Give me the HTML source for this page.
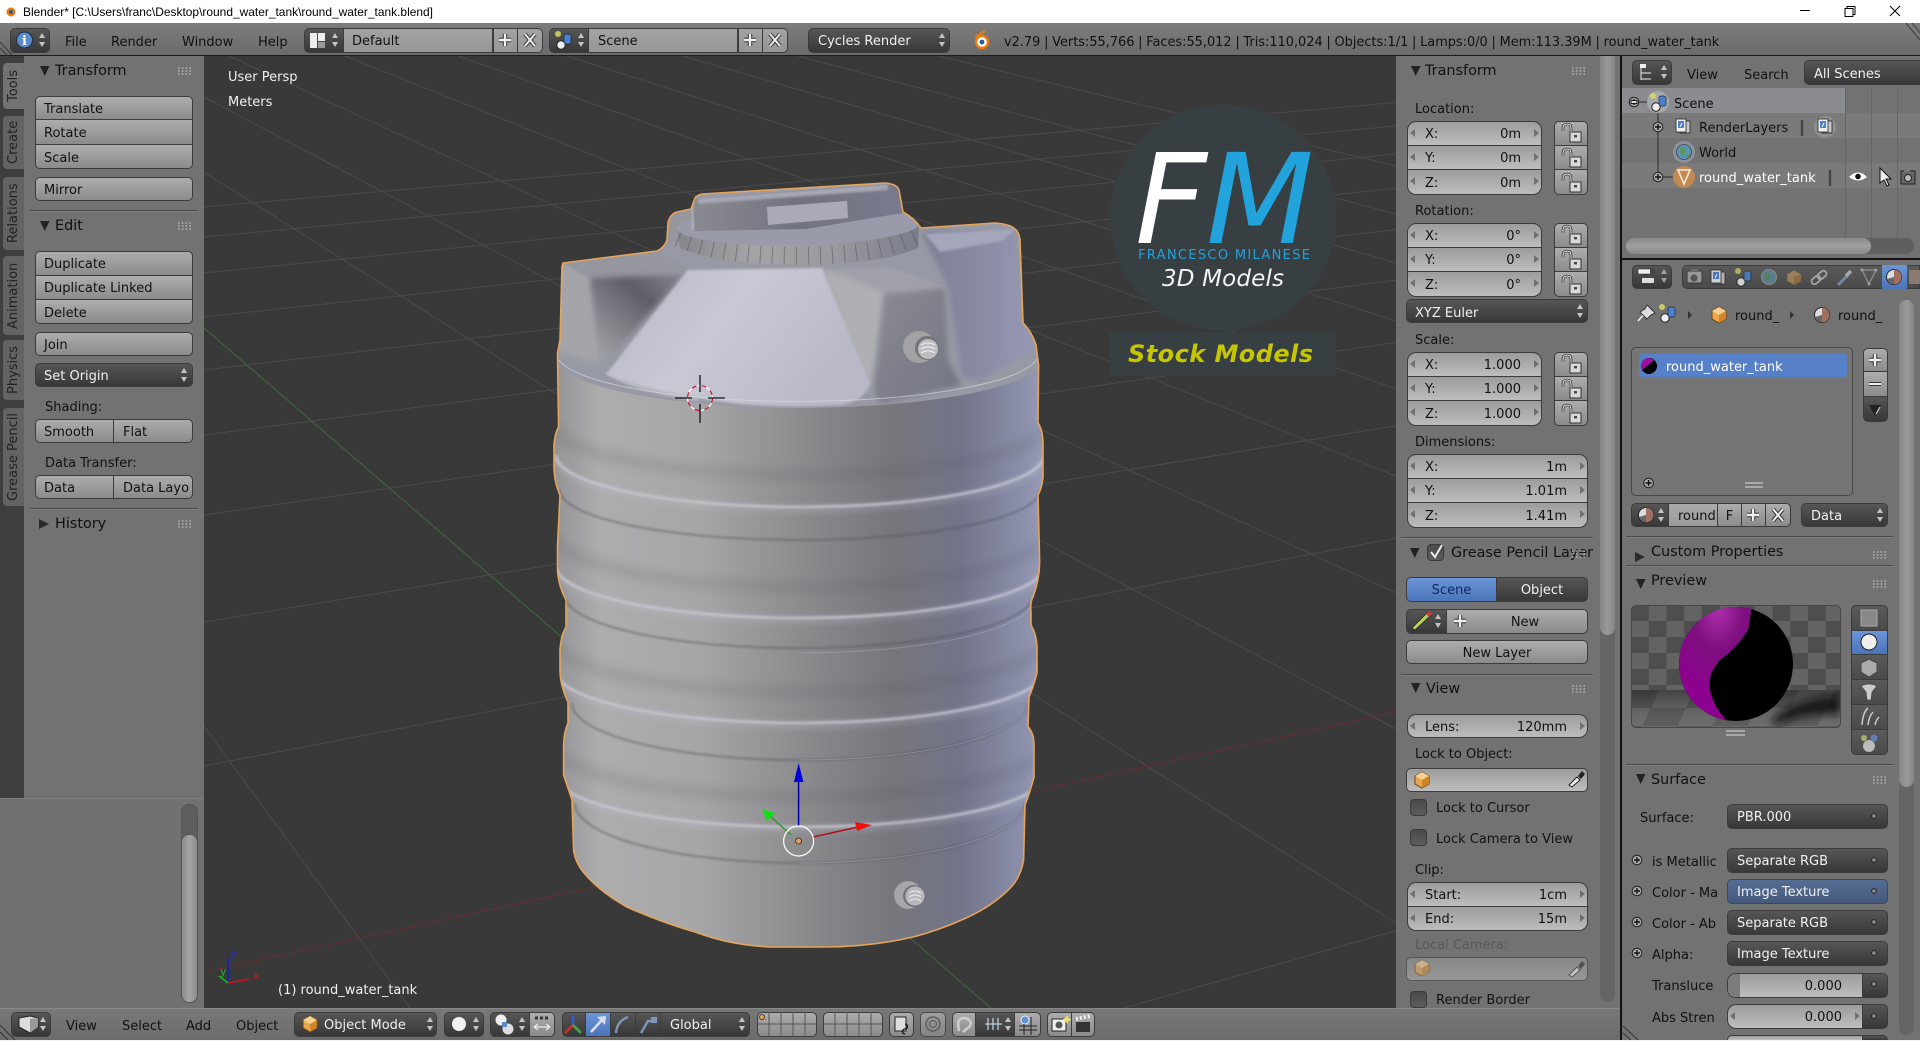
<!DOCTYPE html>
<html><head><meta charset="utf-8"><title>Blender</title>
<style>
html,body{margin:0;padding:0;background:#727272;overflow:hidden;width:1920px;height:1041px}
#root{position:relative;width:1920px;height:1041px;overflow:hidden;font:13px/16px "DejaVu Sans","Liberation Sans",sans-serif;color:#111}
.p{position:absolute}
.t{position:absolute;white-space:nowrap;line-height:16px;margin-top:1px}
.h{font-size:14.4px;margin-top:0}
.w{color:#f0f0f0}
.bx{position:absolute;box-sizing:border-box;border:1px solid #3c3c3c;white-space:nowrap;overflow:hidden;line-height:26px}
.d1{line-height:28px}
.l{background:linear-gradient(#adadad,#8b8b8b);color:#111;padding-left:8px}
.dk{background:linear-gradient(#565656,#383838);color:#f0f0f0}
.fd{background:linear-gradient(#a3a3a3,#969696);color:#111}
.n{background:linear-gradient(#9c9c9c,#bdbdbd);color:#111}
.n i,.n u{position:absolute;font-style:normal;text-decoration:none}
.n i{left:17px}.n u{right:20px}
.n::before,.n::after{content:"";position:absolute;top:7px;border:4px solid transparent}
.n::before{left:2px;border-right:5px solid #707070;border-left:0}
.n::after{right:2px;border-left:5px solid #707070;border-right:0}
.nn::before,.nn::after{display:none}
.ra{border-radius:9px}.rt{border-radius:9px 9px 0 0}.rb{border-radius:0 0 9px 9px}
.r5{border-radius:5px}.rl{border-radius:5px 0 0 5px}.rr{border-radius:0 5px 5px 0}
.rT{border-radius:5px 5px 0 0}.rB{border-radius:0 0 5px 5px}
.bl{background:linear-gradient(#6b95d8,#4b75b8)}
.c{text-align:center;padding:0}
.tab{position:absolute;writing-mode:vertical-rl;transform:rotate(180deg);text-align:center;background:#636363;color:#222;border-radius:0 4px 4px 0;line-height:21px;white-space:nowrap;overflow:hidden}
.chk{position:absolute;box-sizing:border-box;background:linear-gradient(#4a4a4a,#5c5c5c);border:1px solid #3a3a3a;border-radius:4px}
.sep{position:absolute;height:1px;background:#4a4a4a;border-bottom:1px solid #808080}
svg{position:absolute;left:0;top:0}
</style></head><body><div id="root">

<!-- viewport -->
<svg width="1920" height="1041" viewBox="0 0 1920 1041">
<defs>
<path id="sil" d="M563,263 L657,251 Q664,248 667,240 L668,223 Q670,214 677,212 L691,209 L695,198 Q697,195 702,194 L885,183 Q897,184 899,190 L903,212 Q914,218 921,228 L995,223 Q1010,224 1015,229 Q1019,232 1020,240 L1023,323 Q1032,332 1036,345 L1038.6,365 L1038,423 Q1043,430 1043,445 L1043,477 Q1042,488 1038,495 L1039.6,560 Q1040,578 1033,597 Q1030,602 1031,612 L1031,625 Q1037,635 1037,650 L1037,673 Q1033,688 1029,697 L1028,727 Q1034,733 1034,745 L1034,777 Q1030,792 1025,805 L1023.6,860 Q1021,875 1013,885 Q995,905 966,918 Q940,930 913,937 Q870,947 823,947 L770,947 Q730,945 698,933 Q660,922 627,907 Q600,892 584,873 Q575,862 573.6,850 L572,800 Q568,788 563.6,775 L563.6,745 Q564,732 568,723 L568,702 Q560,685 560,670 L560,650 Q561,635 566,627 L566,600 Q558,585 557.5,570 L557.5,547 L560,495 Q554,482 554,465 L554,445 Q555,433 558.6,427 L557.5,353 L560,340 L562,267 Z"/>
<clipPath id="tc"><use href="#sil"/></clipPath>
<linearGradient id="body" x1="0" x2="1" y1="0" y2="0"><stop offset="0" stop-color="#929294"/><stop offset=".1" stop-color="#adadae"/><stop offset=".3" stop-color="#a6a6a7"/><stop offset=".5" stop-color="#8c8c8f"/><stop offset=".68" stop-color="#76767c"/><stop offset=".82" stop-color="#727488"/><stop offset=".95" stop-color="#8c90ac"/><stop offset="1" stop-color="#9da0bb"/></linearGradient>
<linearGradient id="cone" x1="0" x2="1" y1="0" y2=".4"><stop offset="0" stop-color="#b6b6c2"/><stop offset=".5" stop-color="#c9c9d5"/><stop offset="1" stop-color="#b8b8c8"/></linearGradient>
<linearGradient id="rec" x1="1" x2="0" y1="0" y2="1"><stop offset="0" stop-color="#85858e"/><stop offset=".35" stop-color="#5e5e68"/><stop offset="1" stop-color="#a8a8ad"/></linearGradient>
<linearGradient id="blk" x1="0" x2="1" y1="0" y2="1"><stop offset="0" stop-color="#8a8a91"/><stop offset="1" stop-color="#737484"/></linearGradient>
<linearGradient id="rear" x1="0" x2="1" y1="0" y2="0"><stop offset="0" stop-color="#7c7e92"/><stop offset="1" stop-color="#9698b6"/></linearGradient>
<linearGradient id="knurl" x1="0" x2="1" y1="0" y2="0"><stop offset="0" stop-color="#85858c"/><stop offset=".3" stop-color="#a4a4a6"/><stop offset=".65" stop-color="#9a9a9f"/><stop offset="1" stop-color="#7a7c8a"/></linearGradient>
<linearGradient id="hand" x1="0" x2="1" y1="0" y2="0"><stop offset="0" stop-color="#8a8a93"/><stop offset=".5" stop-color="#72737f"/><stop offset="1" stop-color="#787a8e"/></linearGradient>
<filter id="b1" x="-10%" y="-50%" width="120%" height="200%"><feGaussianBlur stdDeviation="1.1"/></filter>
<filter id="b2" x="-10%" y="-50%" width="120%" height="200%"><feGaussianBlur stdDeviation="5"/></filter>
<filter id="b3" x="-20%" y="-20%" width="140%" height="140%"><feGaussianBlur stdDeviation="3"/></filter>
</defs>
<rect x="204" y="56" width="1192" height="952" fill="#393939"/>
<g fill="none" stroke="#4b4b4b" stroke-width="1">
<path d="M204,207L1396,102.5M204,237L1396,125.9M204,273L1396,153.9M204,317L1396,188.2M204,370L1396,229.5M204,435L1396,280.1M204,515L1396,342.5M204,622L1396,425.8M204,766L1396,538M1124,1008L1396,930.6"/>
<path d="M938,56L1396,166M798,56L1396,214M683,56L1396,263M567,56L1396,321M458,56L1396,389M345,56L1396,476M229,56L1396,593M204,97L1396,729M204,172L1396,923M204,726L410,1008"/>
<path d="M204,972L1396,712" stroke="#6a2d2d"/>
<path d="M204,328L991,1008" stroke="#3e6a3e"/>
</g>
<!-- logo -->
<circle cx="1223" cy="217.6" r="113" fill="#373f43"/>
<rect x="1109" y="332" width="227" height="44" fill="#373f43"/>
<text x="1135" y="243" font-family="DejaVu Sans" font-style="oblique" font-size="125" fill="#fff">F</text>
<text x="1206" y="243" font-family="DejaVu Sans" font-style="oblique" font-size="125" fill="#23a3dc">M</text>
<text x="1138" y="259" font-family="DejaVu Sans" font-size="13" fill="#23a3dc" textLength="172">FRANCESCO MILANESE</text>
<text x="1162" y="286" font-family="DejaVu Sans" font-style="oblique" font-size="23" fill="#f2f2f2" textLength="122">3D Models</text>
<text x="1128" y="362" font-family="DejaVu Sans" font-style="oblique" font-weight="bold" font-size="24" fill="#c5c600" textLength="185">Stock Models</text>
<!-- tank -->
<g clip-path="url(#tc)">
<rect x="550" y="180" width="500" height="780" fill="url(#body)"/>
<path d="M555,180H1045V357A241,50 0 0 1 555,357Z" fill="#979aa4"/>
<path d="M557,263H592L600,365L557,350Z" fill="#a5a5a9" filter="url(#b3)"/>
<path d="M563,263L657,251L690,270L588,278Z" fill="#96969e" filter="url(#b1)"/>
<path d="M590,278L684,274L610,358L600,356Z" fill="url(#rec)" filter="url(#b3)"/>
<path d="M823,270L891,267L945,287L884,293Z" fill="#a0a0aa" filter="url(#b1)"/>
<path d="M822,268L884,292L878,340L870,392Z" fill="#b0b0b4" filter="url(#b3)"/>
<path d="M885,295L945,289L948,360L962,385L880,404L874,392Z" fill="url(#blk)" filter="url(#b3)"/>
<path d="M921,232L1015,230L1022,317L1036,348L980,381L962,377L948,287Z" fill="url(#rear)" filter="url(#b3)"/>
<path d="M925,234L1015,229L1002,241L940,252Z" fill="#a4a6ba" filter="url(#b1)"/>
<path d="M688,270L822,268L870,383Q866,400 841,405Q760,410 698,398Q640,390 607,373Z" fill="url(#cone)" filter="url(#b1)"/>
<path d="M606,373Q640,392 698,400" fill="none" stroke="#eee" stroke-width="2" opacity=".5" filter="url(#b1)"/>
<path d="M559,360A241,48 0 0 0 1038,357" fill="none" stroke="#dcdce4" stroke-width="1" opacity=".65"/>
<g fill="none">
<g filter="url(#b2)" stroke="#50505a" stroke-width="10" opacity=".17">
<path d="M555,425A245,50 0 0 0 1045,425"/><path d="M555,535A245,52 0 0 0 1045,535"/><path d="M555,640A245,52 0 0 0 1045,640"/><path d="M555,745A245,52 0 0 0 1045,745"/>
</g>
<g filter="url(#b3)" stroke="#c8c8d4" stroke-width="8" opacity=".22">
<path d="M556,457A244,52 0 0 0 1044,457"/><path d="M556,568A244,52 0 0 0 1044,568"/><path d="M556,673A244,52 0 0 0 1044,673"/><path d="M556,777A244,52 0 0 0 1044,777"/>
</g>
<g filter="url(#b1)" stroke="#c8c8d6" stroke-width="2.6" opacity=".85">
<path d="M556,455A244,52 0 0 0 1044,455"/><path d="M556,566A244,52 0 0 0 1044,566"/><path d="M556,671A244,52 0 0 0 1044,671"/><path d="M556,775A244,52 0 0 0 1044,775"/>
</g>
<g filter="url(#b1)" stroke="#4e4e58" stroke-width="1.8" opacity=".5">
<path d="M560,490A240,50 0 0 0 1040,490"/><path d="M566,600A234,53 0 0 0 1032,600"/><path d="M572,703A228,57 0 0 0 1028,703"/><path d="M575,803A225,60 0 0 0 1025,803"/>
</g>
<g stroke="#a8abbd" stroke-width="1" opacity=".5">
<path d="M800,653A234,53 0 0 0 1032,600"/><path d="M800,760A228,57 0 0 0 1028,703"/><path d="M800,863A225,60 0 0 0 1025,803"/>
</g>
</g>
<!-- cap -->
<path d="M668,212H691L690,234L668,244Z" fill="#96969c"/>
<path d="M677,228L680,248Q720,265 798,265Q880,265 918,248L919,223Z" fill="url(#knurl)"/>
<path d="M678,238Q720,256 798,256Q880,256 919,235" fill="none" stroke="#55555c" stroke-width="18" stroke-dasharray="1 11" opacity=".55"/>
<ellipse cx="798" cy="226" rx="121" ry="19" transform="rotate(-1.2 798 226)" fill="#9a9baa"/>
<path d="M695,198L888,184Q897,185 899,190L903,213L806,229L694,231Q689,215 695,198Z" fill="url(#hand)"/>
<path d="M698,201L888,187" stroke="#a6a6b4" stroke-width="6" filter="url(#b1)"/>
<path d="M692,202Q690,216 694,230" stroke="#a8a8ae" stroke-width="5" fill="none" filter="url(#b1)"/>
<path d="M767,207L847,201L848,218L768,225Z" fill="#a9a9ba"/>
<!-- fittings -->
<circle cx="919" cy="347" r="16" fill="#a3a3a6"/><circle cx="927" cy="348" r="12" fill="#74747a"/><circle cx="928" cy="349" r="10" fill="#bdbdc2"/>
<path d="M921,345q7,-4 14,0M921,349q7,-4 14,0M921,353q7,-4 14,0" stroke="#f0f0f0" fill="none"/>
<circle cx="908" cy="895" r="14" fill="#a6a6aa"/><circle cx="914" cy="896" r="11" fill="#74747c"/><circle cx="915" cy="896" r="9.5" fill="#b8b8bc"/>
<path d="M909,893q6,-4 12,0M909,897q6,-4 12,0M909,901q6,-4 12,0" stroke="#ececec" fill="none"/>
</g>
<use href="#sil" fill="none" stroke="#e5a45c" stroke-width="1.6" stroke-linejoin="round"/>
<!-- 3d cursor -->
<circle cx="700" cy="398" r="12.5" fill="none" stroke="#fff" stroke-width="1.2"/>
<circle cx="700" cy="398" r="12.5" fill="none" stroke="#c01030" stroke-width="1.2" stroke-dasharray="5 5"/>
<path d="M675,398H692M708,398H725M700,375V392M700,404V423" stroke="#111" stroke-width="1.3"/>
<!-- manipulator -->
<path d="M798.6,826V780" stroke="#0000b0" stroke-width="1.5"/><path d="M798.6,763L794,782H803.5Z" fill="#0000e0"/>
<path d="M791,835L770,816" stroke="#2a9a2a" stroke-width="1.5"/><path d="M762,809L775,813L767,821Z" fill="#10e010"/>
<path d="M813,837L858,827" stroke="#b01020" stroke-width="1.5"/><path d="M872,825L855,822L857,831Z" fill="#f01010"/>
<circle cx="798.6" cy="841" r="15" fill="none" stroke="#fff" stroke-width="1.2"/>
<circle cx="798.6" cy="841" r="3" fill="#e0a060" stroke="#222" stroke-width=".8"/>
<!-- axis gizmo -->
<path d="M228,983V958" stroke="#1020d0" stroke-width="1.5"/><path d="M228,983L250,979" stroke="#d01020" stroke-width="1.5"/><path d="M228,983L219,976" stroke="#10c020" stroke-width="1.5"/>
<text x="231" y="958" font-family="DejaVu Sans" font-size="11" fill="#2030d0">z</text>
<text x="253" y="979" font-family="DejaVu Sans" font-size="11" fill="#c02020">x</text>
<text x="220" y="975" font-family="DejaVu Sans" font-size="11" fill="#20b030">y</text>
</svg>
<div class="t w" style="left:228px;top:69px">User Persp</div>
<div class="t w" style="left:228px;top:94px">Meters</div>
<div class="t w" style="left:278px;top:982px">(1) round_water_tank</div>

<!-- title bar -->
<div class="p" style="left:0;top:0;width:1920px;height:23px;background:#fff"></div>
<svg width="1920" height="23" viewBox="0 0 1920 23" style="z-index:2">
<circle cx="11" cy="12" r="4.5" fill="#e87d0d"/><circle cx="11" cy="12" r="2" fill="#2a5a9a"/>
<text x="23" y="16" font-family="Liberation Sans" font-size="12" fill="#000" textLength="410" lengthAdjust="spacingAndGlyphs">Blender* [C:\Users\franc\Desktop\round_water_tank\round_water_tank.blend]</text>
<path d="M1800,10.5H1810" stroke="#000"/><path d="M1845,8.5h8v8h-8zM1847,8.5v-2h8v8h-2" fill="#fff" stroke="#000"/><path d="M1890,6L1900,16M1900,6L1890,16" stroke="#000"/>
</svg>

<!-- top bar -->
<div class="p" style="left:0;top:23px;width:1920px;height:33px;background:linear-gradient(#7d7d7d,#6b6b6b);border-bottom:1px solid #1c1c1c;box-sizing:border-box"></div>
<div class="bx dk r5" style="left:10px;top:28px;width:40px;height:25px"></div>
<div class="t" style="left:65px;top:34px">File</div><div class="t" style="left:111px;top:34px">Render</div><div class="t" style="left:182px;top:34px">Window</div><div class="t" style="left:258px;top:34px">Help</div>
<div class="bx dk rl" style="left:304px;top:28px;width:40px;height:25px"></div>
<div class="bx fd" style="left:343px;top:28px;width:150px;height:25px;padding-left:8px">Default</div>
<div class="bx fd" style="left:493px;top:28px;width:25px;height:25px"></div>
<div class="bx fd rr" style="left:517px;top:28px;width:26px;height:25px"></div>
<div class="bx dk rl" style="left:549px;top:28px;width:40px;height:25px"></div>
<div class="bx fd" style="left:588px;top:28px;width:150px;height:25px;padding-left:9px">Scene</div>
<div class="bx fd" style="left:738px;top:28px;width:25px;height:25px"></div>
<div class="bx fd rr" style="left:762px;top:28px;width:26px;height:25px"></div>
<div class="bx dk r5" style="left:808px;top:28px;width:142px;height:25px;padding-left:9px">Cycles Render</div>
<div class="t" style="left:1004px;top:34px;font-size:12.9px;word-spacing:-.35px">v2.79 | Verts:55,766 | Faces:55,012 | Tris:110,024 | Objects:1/1 | Lamps:0/0 | Mem:113.39M | round_water_tank</div>

<!-- left tabs + tool shelf -->
<div class="p" style="left:0;top:56px;width:24px;height:742px;background:#3e3e3e"></div>
<div class="p" style="left:24px;top:56px;width:180px;height:742px;background:#727272"></div>
<div class="tab" style="left:3px;top:63px;width:21px;height:46px;background:#727272">Tools</div>
<div class="tab" style="left:3px;top:116px;width:21px;height:53px">Create</div>
<div class="tab" style="left:3px;top:177px;width:21px;height:73px">Relations</div>
<div class="tab" style="left:3px;top:256px;width:21px;height:79px">Animation</div>
<div class="tab" style="left:3px;top:340px;width:21px;height:60px">Physics</div>
<div class="tab" style="left:3px;top:408px;width:21px;height:98px">Grease Pencil</div>
<div class="t h" style="left:55px;top:63px">Transform</div>
<div class="bx l rT" style="left:35px;top:96px;width:158px;height:24px">Translate</div>
<div class="bx l d1" style="left:35px;top:119px;width:158px;height:26px">Rotate</div>
<div class="bx l rB d1" style="left:35px;top:144px;width:158px;height:25px">Scale</div>
<div class="bx l r5" style="left:35px;top:177px;width:158px;height:24px">Mirror</div>
<div class="sep" style="left:30px;top:210px;width:168px"></div>
<div class="t h" style="left:55px;top:218px">Edit</div>
<div class="bx l rT" style="left:35px;top:251px;width:158px;height:25px">Duplicate</div>
<div class="bx l" style="left:35px;top:275px;width:158px;height:25px">Duplicate Linked</div>
<div class="bx l rB d1" style="left:35px;top:299px;width:158px;height:25px">Delete</div>
<div class="bx l r5" style="left:35px;top:332px;width:158px;height:24px">Join</div>
<div class="bx dk r5" style="left:35px;top:363px;width:158px;height:24px;padding-left:8px">Set Origin</div>
<div class="t" style="left:45px;top:399px">Shading:</div>
<div class="bx l rl" style="left:35px;top:419px;width:79px;height:24px">Smooth</div>
<div class="bx l rr" style="left:113px;top:419px;width:80px;height:24px;padding-left:9px">Flat</div>
<div class="t" style="left:45px;top:455px">Data Transfer:</div>
<div class="bx l rl" style="left:35px;top:475px;width:79px;height:24px">Data</div>
<div class="bx l rr" style="left:113px;top:475px;width:80px;height:24px;padding-left:9px">Data Layo</div>
<div class="sep" style="left:30px;top:508px;width:168px"></div>
<div class="t h" style="left:55px;top:516px">History</div>
<div class="p" style="left:0;top:798px;width:204px;height:211px;background:#717171;border-top:1px solid #808080;box-sizing:border-box"></div>
<div class="p" style="left:181px;top:804px;width:17px;height:199px;border-radius:8px;background:#5e5e5e;border:1px solid #555;box-sizing:border-box"></div>
<div class="p" style="left:181px;top:834px;width:17px;height:169px;border-radius:8px;background:linear-gradient(90deg,#8c8c8c,#a4a4a4,#8c8c8c);border:1px solid #555;box-sizing:border-box"></div>

<!-- N panel -->
<div class="p" style="left:1396px;top:56px;width:224px;height:952px;background:#727272"></div>
<div class="p" style="left:1600px;top:56px;width:15px;height:946px;border-radius:8px;background:#656565"></div>
<div class="p" style="left:1600px;top:56px;width:15px;height:579px;border-radius:0 0 8px 8px;background:linear-gradient(90deg,#858585,#9a9a9a,#858585)"></div>
<div class="t h" style="left:1425px;top:63px">Transform</div>
<div class="t" style="left:1415px;top:101px">Location:</div>
<div class="bx n rt" style="left:1407px;top:121px;width:135px;height:25px"><i>X:</i><u>0m</u></div>
<div class="bx n" style="left:1407px;top:145px;width:135px;height:25px"><i>Y:</i><u>0m</u></div>
<div class="bx n rb d1" style="left:1407px;top:169px;width:135px;height:26px"><i>Z:</i><u>0m</u></div>
<div class="bx l rT" style="left:1554px;top:121px;width:34px;height:25px"></div><div class="bx l" style="left:1554px;top:145px;width:34px;height:25px"></div><div class="bx l rB" style="left:1554px;top:169px;width:34px;height:26px"></div>
<div class="t" style="left:1415px;top:203px">Rotation:</div>
<div class="bx n rt" style="left:1407px;top:223px;width:135px;height:25px"><i>X:</i><u>0°</u></div>
<div class="bx n" style="left:1407px;top:247px;width:135px;height:25px"><i>Y:</i><u>0°</u></div>
<div class="bx n rb d1" style="left:1407px;top:271px;width:135px;height:26px"><i>Z:</i><u>0°</u></div>
<div class="bx l rT" style="left:1554px;top:223px;width:34px;height:25px"></div><div class="bx l" style="left:1554px;top:247px;width:34px;height:25px"></div><div class="bx l rB" style="left:1554px;top:271px;width:34px;height:26px"></div>
<div class="bx dk r5 d1" style="left:1406px;top:299px;width:182px;height:24px;padding-left:8px">XYZ Euler</div>
<div class="t" style="left:1415px;top:332px">Scale:</div>
<div class="bx n rt" style="left:1407px;top:352px;width:135px;height:25px"><i>X:</i><u>1.000</u></div>
<div class="bx n" style="left:1407px;top:376px;width:135px;height:25px"><i>Y:</i><u>1.000</u></div>
<div class="bx n rb d1" style="left:1407px;top:400px;width:135px;height:26px"><i>Z:</i><u>1.000</u></div>
<div class="bx l rT" style="left:1554px;top:352px;width:34px;height:25px"></div><div class="bx l" style="left:1554px;top:376px;width:34px;height:25px"></div><div class="bx l rB" style="left:1554px;top:400px;width:34px;height:26px"></div>
<div class="t" style="left:1415px;top:434px">Dimensions:</div>
<div class="bx n rt" style="left:1407px;top:454px;width:181px;height:25px"><i>X:</i><u>1m</u></div>
<div class="bx n" style="left:1407px;top:478px;width:181px;height:25px"><i>Y:</i><u>1.01m</u></div>
<div class="bx n rb d1" style="left:1407px;top:502px;width:181px;height:26px"><i>Z:</i><u>1.41m</u></div>
<div class="sep" style="left:1401px;top:537px;width:192px"></div>
<div class="chk" style="left:1427px;top:544px;width:17px;height:17px"></div>
<div class="t h" style="left:1451px;top:545px">Grease Pencil Layer</div>
<div class="bx bl rl c" style="left:1406px;top:577px;width:91px;height:25px;color:#0c2a60">Scene</div>
<div class="bx dk rr c" style="left:1496px;top:577px;width:92px;height:25px">Object</div>
<div class="bx dk rl" style="left:1406px;top:609px;width:41px;height:25px"></div>
<div class="bx l rr c" style="left:1446px;top:609px;width:142px;height:25px;padding-left:16px">New</div>
<div class="bx l r5 c" style="left:1406px;top:640px;width:182px;height:24px">New Layer</div>
<div class="sep" style="left:1401px;top:674px;width:192px"></div>
<div class="t h" style="left:1426px;top:681px">View</div>
<div class="bx n ra" style="left:1407px;top:714px;width:181px;height:24px"><i>Lens:</i><u>120mm</u></div>
<div class="t" style="left:1415px;top:746px">Lock to Object:</div>
<div class="bx n nn r5" style="left:1406px;top:768px;width:182px;height:24px"></div>
<div class="chk" style="left:1410px;top:799px;width:17px;height:17px"></div><div class="t" style="left:1436px;top:800px">Lock to Cursor</div>
<div class="chk" style="left:1410px;top:829px;width:17px;height:17px"></div><div class="t" style="left:1436px;top:831px">Lock Camera to View</div>
<div class="t" style="left:1415px;top:862px">Clip:</div>
<div class="bx n rt" style="left:1407px;top:882px;width:181px;height:25px"><i>Start:</i><u>1cm</u></div>
<div class="bx n rb" style="left:1407px;top:906px;width:181px;height:25px"><i>End:</i><u>15m</u></div>
<div class="t" style="left:1415px;top:937px;color:#585858">Local Camera:</div>
<div class="bx n nn r5" style="left:1406px;top:957px;width:182px;height:24px;opacity:.5"></div>
<div class="chk" style="left:1410px;top:991px;width:17px;height:17px"></div><div class="t" style="left:1436px;top:992px">Render Border</div>

<!-- bottom header -->
<div class="p" style="left:0;top:1008px;width:1620px;height:32px;background:linear-gradient(#787878,#6c6c6c);border-top:1px solid #888;box-sizing:border-box"></div>
<div class="bx dk r5" style="left:11px;top:1012px;width:40px;height:25px"></div>
<div class="t" style="left:66px;top:1018px">View</div><div class="t" style="left:122px;top:1018px">Select</div><div class="t" style="left:186px;top:1018px">Add</div><div class="t" style="left:236px;top:1018px">Object</div>
<div class="bx dk r5" style="left:294px;top:1012px;width:143px;height:25px;padding-left:29px">Object Mode</div>
<div class="bx dk r5" style="left:444px;top:1012px;width:40px;height:25px"></div>
<div class="bx dk rl" style="left:490px;top:1012px;width:40px;height:25px"></div>
<div class="bx l rr" style="left:529px;top:1012px;width:26px;height:25px"></div>
<div class="bx dk rl" style="left:562px;top:1012px;width:24px;height:25px"></div>
<div class="bx bl" style="left:585px;top:1012px;width:26px;height:25px"></div>
<div class="bx dk" style="left:610px;top:1012px;width:26px;height:25px"></div>
<div class="bx dk" style="left:635px;top:1012px;width:26px;height:25px"></div>
<div class="bx dk rr" style="left:660px;top:1012px;width:90px;height:25px;padding-left:9px">Global</div>
<div class="bx l r5" style="left:757px;top:1012px;width:60px;height:25px"></div>
<div class="bx l r5" style="left:823px;top:1012px;width:60px;height:25px"></div>
<div class="bx l r5" style="left:889px;top:1012px;width:25px;height:25px"></div>
<div class="bx l r5" style="left:920px;top:1012px;width:26px;height:25px;opacity:.75"></div>
<div class="bx l rl" style="left:952px;top:1012px;width:24px;height:25px"></div>
<div class="bx dk" style="left:975px;top:1012px;width:40px;height:25px"></div>
<div class="bx l rr" style="left:1014px;top:1012px;width:27px;height:25px"></div>
<div class="bx l rl" style="left:1047px;top:1012px;width:25px;height:25px"></div>
<div class="bx l rr" style="left:1071px;top:1012px;width:24px;height:25px"></div>

<!-- right side: outliner -->
<div class="p" style="left:1620px;top:56px;width:300px;height:984px;background:#727272;border-left:2px solid #111;box-sizing:border-box"></div>
<div class="bx dk r5" style="left:1632px;top:60px;width:40px;height:25px"></div>
<div class="t" style="left:1687px;top:67px">View</div><div class="t" style="left:1744px;top:67px">Search</div>
<div class="bx dk" style="left:1804px;top:60px;width:116px;height:25px;padding-left:9px;border-radius:5px 0 0 5px;border-right:0;line-height:27px">All Scenes</div>
<div class="p" style="left:1622px;top:87px;width:298px;height:151px;background:#727272"></div>
<div class="p" style="left:1622px;top:113px;width:298px;height:25px;background:#7a7a7a"></div>
<div class="p" style="left:1622px;top:163px;width:298px;height:25px;background:#7a7a7a"></div>
<div class="p" style="left:1622px;top:88px;width:223px;height:25px;background:#8b8c90"></div>
<div class="p" style="left:1845px;top:87px;width:1px;height:151px;background:#666"></div>
<div class="p" style="left:1871px;top:87px;width:1px;height:151px;background:#666"></div>
<div class="p" style="left:1897px;top:87px;width:1px;height:151px;background:#666"></div>
<div class="t" style="left:1674px;top:96px">Scene</div>
<div class="t" style="left:1699px;top:120px">RenderLayers</div>
<div class="t" style="left:1699px;top:145px">World</div>
<div class="t" style="left:1699px;top:170px;color:#fff">round_water_tank</div>
<div class="p" style="left:1626px;top:238px;width:288px;height:16px;border-radius:8px;background:#5f5f5f"></div>
<div class="p" style="left:1626px;top:238px;width:245px;height:16px;border-radius:8px;background:linear-gradient(#8a8a8a,#9f9f9f,#8a8a8a)"></div>
<div class="p" style="left:1622px;top:258px;width:298px;height:2px;background:#151515"></div>

<!-- properties -->
<div class="bx dk r5" style="left:1632px;top:265px;width:40px;height:24px"></div>
<div class="p" style="left:1682px;top:265px;width:238px;height:24px;background:linear-gradient(#5a5a5a,#4a4a4a);border-radius:5px 0 0 5px;box-sizing:border-box;border:1px solid #3c3c3c"></div>
<div class="p" style="left:1882px;top:265px;width:25px;height:24px;background:linear-gradient(#6d96d8,#4b75b8)"></div>
<div class="p" style="left:1899px;top:300px;width:15px;height:735px;border-radius:8px;background:#656565"></div>
<div class="p" style="left:1899px;top:300px;width:15px;height:487px;border-radius:8px;background:linear-gradient(90deg,#858585,#9a9a9a,#858585)"></div>
<div class="t" style="left:1735px;top:308px">round_</div>
<div class="t" style="left:1838px;top:308px">round_</div>
<div class="bx" style="left:1631px;top:347px;width:222px;height:149px;background:#757575;border-color:#484848;border-radius:5px"></div>
<div class="p" style="left:1639px;top:354px;width:208px;height:23px;border-radius:3px;background:#5680c8"></div>
<div class="t" style="left:1666px;top:359px;color:#fff">round_water_tank</div>
<div class="bx l rT" style="left:1863px;top:348px;width:25px;height:24px"></div>
<div class="bx l" style="left:1863px;top:371px;width:25px;height:26px"></div>
<div class="bx dk rB" style="left:1863px;top:396px;width:25px;height:26px"></div>
<div class="bx dk rl" style="left:1631px;top:503px;width:38px;height:24px"></div>
<div class="bx fd" style="left:1668px;top:503px;width:50px;height:24px;background:linear-gradient(#aaa,#9a9a9a);padding-left:9px">round</div>
<div class="bx l c" style="left:1717px;top:503px;width:25px;height:24px">F</div>
<div class="bx l" style="left:1741px;top:503px;width:25px;height:24px"></div>
<div class="bx l rr" style="left:1765px;top:503px;width:26px;height:24px"></div>
<div class="bx dk r5" style="left:1801px;top:503px;width:87px;height:24px;padding-left:9px">Data</div>
<div class="sep" style="left:1626px;top:536px;width:267px"></div>
<div class="t h" style="left:1651px;top:544px">Custom Properties</div>
<div class="sep" style="left:1626px;top:565px;width:267px"></div>
<div class="t h" style="left:1651px;top:573px">Preview</div>

<!-- preview -->
<svg width="1920" height="1041" viewBox="0 0 1920 1041">
<defs>
<pattern id="chk" x="1631" y="605" width="35.4" height="32" patternUnits="userSpaceOnUse"><rect width="35.4" height="32" fill="#636363"/><rect width="17.7" height="16" fill="#4e4e4e"/><rect x="17.7" y="16" width="17.7" height="16" fill="#4e4e4e"/></pattern>
<pattern id="flc" x="1631" y="690" width="70" height="36" patternUnits="userSpaceOnUse" patternTransform="skewX(-25)"><rect width="70" height="36" fill="#5f5f5f"/><rect width="35" height="18" fill="#6f6f6f"/><rect x="35" y="18" width="35" height="18" fill="#6f6f6f"/></pattern>
<linearGradient id="fl" x1="0" x2="0" y1="0" y2="1"><stop offset="0" stop-color="#000" stop-opacity=".4"/><stop offset=".6" stop-color="#000" stop-opacity=".08"/><stop offset="1" stop-color="#000" stop-opacity="0"/></linearGradient>
<clipPath id="pv"><rect x="1631" y="605" width="210" height="123" rx="5"/></clipPath>
<clipPath id="sph"><circle cx="1736" cy="664" r="57"/></clipPath>
<radialGradient id="mg" cx=".55" cy=".05" r=".75"><stop offset="0" stop-color="#b030b0"/><stop offset=".45" stop-color="#7e1080"/><stop offset="1" stop-color="#8d0090"/></radialGradient>
<filter id="sm"><feGaussianBlur stdDeviation="4"/></filter>
</defs>
<g clip-path="url(#pv)"><rect x="1631" y="605" width="210" height="123" fill="url(#chk)"/>
<rect x="1631" y="690" width="210" height="38" fill="url(#flc)"/>
<rect x="1631" y="690" width="210" height="38" fill="url(#fl)"/>
<path d="M1770,722Q1790,698 1840,695V715Q1800,712 1780,725Z" fill="#111" opacity=".8" filter="url(#sm)"/></g>
<g clip-path="url(#sph)"><rect x="1675" y="600" width="125" height="125" fill="#000"/>
<path d="M1753,600L1748,630Q1735,650 1720,660Q1707,675 1710,690Q1714,708 1728,722L1675,725V600Z" fill="url(#mg)"/></g>
<rect x="1631.5" y="605.5" width="209" height="122" rx="5" fill="none" stroke="#484848"/>
</svg>
<div class="bx l rT" style="left:1851px;top:605px;width:37px;height:26px;background:linear-gradient(#5a5a5a,#4a4a4a)"></div>
<div class="bx bl" style="left:1851px;top:630px;width:37px;height:25px"></div>
<div class="bx" style="left:1851px;top:654px;width:37px;height:26px;background:linear-gradient(#5a5a5a,#4a4a4a)"></div>
<div class="bx" style="left:1851px;top:679px;width:37px;height:26px;background:linear-gradient(#5a5a5a,#4a4a4a)"></div>
<div class="bx" style="left:1851px;top:704px;width:37px;height:26px;background:linear-gradient(#5a5a5a,#4a4a4a)"></div>
<div class="bx rB" style="left:1851px;top:729px;width:37px;height:26px;background:linear-gradient(#5a5a5a,#4a4a4a)"></div>
<div class="sep" style="left:1626px;top:764px;width:267px"></div>
<div class="t h" style="left:1651px;top:772px">Surface</div>
<div class="t" style="left:1640px;top:810px">Surface:</div>
<div class="bx dk r5" style="left:1727px;top:804px;width:161px;height:25px;padding-left:9px">PBR.000</div>
<div class="t" style="left:1652px;top:854px">is Metallic</div>
<div class="bx dk r5" style="left:1727px;top:848px;width:161px;height:25px;padding-left:9px">Separate RGB</div>
<div class="t" style="left:1652px;top:885px">Color - Ma</div>
<div class="bx r5" style="left:1727px;top:879px;width:161px;height:25px;padding-left:9px;color:#f0f0f0;background:linear-gradient(#566d94,#44597c);border-color:#3a4a60">Image Texture</div>
<div class="t" style="left:1652px;top:916px">Color - Ab</div>
<div class="bx dk r5" style="left:1727px;top:910px;width:161px;height:25px;padding-left:9px">Separate RGB</div>
<div class="t" style="left:1652px;top:947px">Alpha:</div>
<div class="bx dk r5" style="left:1727px;top:941px;width:161px;height:25px;padding-left:9px">Image Texture</div>
<div class="t" style="left:1652px;top:978px">Transluce</div>
<div class="bx nn n" style="left:1727px;top:973px;width:136px;height:25px;border-radius:9px 0 0 9px"><u>0.000</u></div>
<div class="p" style="left:1728px;top:974px;width:12px;height:23px;border-radius:9px 0 0 9px;background:#7c7c7c"></div>
<div class="bx dk rr" style="left:1862px;top:973px;width:26px;height:25px"></div>
<div class="t" style="left:1652px;top:1010px">Abs Stren</div>
<div class="bx n" style="left:1727px;top:1004px;width:136px;height:25px;border-radius:9px 0 0 9px"><u>0.000</u></div>
<div class="bx dk rr" style="left:1862px;top:1004px;width:26px;height:25px"></div>
<div class="bx n nn" style="left:1727px;top:1035px;width:136px;height:5px;border-radius:9px 0 0 0;border-bottom:0"></div>
<div class="bx dk" style="left:1862px;top:1035px;width:26px;height:5px;border-radius:0 5px 0 0;border-bottom:0"></div>
<div class="p" style="left:0;top:1040px;width:1920px;height:1px;background:#f4f4f4"></div>

<!-- icons overlay -->
<svg width="1920" height="1041" viewBox="0 0 1920 1041" style="z-index:5;pointer-events:none">
<defs>
<path id="ud" d="M-3,-2L0,-7L3,-2ZM-3,2L0,7L3,2Z" fill="#c4c4c4"/>
<path id="grip" d="M0,1H15M0,4H15M0,7H15" stroke="#d4d4d4" stroke-dasharray="1.6 2.2" stroke-width="1.1" fill="none"/>
<path id="td" d="M0,0H9.5L4.7,10Z" fill="#222"/>
<path id="tr" d="M0,0L10,5L0,10Z" fill="#2a2a2a"/>
<g id="lock"><rect x="-2" y="-1" width="11" height="10" fill="#d8d8d8" stroke="#333"/><rect x="2" y="2" width="3" height="2.4" fill="#444"/><path d="M-1,-1V-5Q-1,-9 -5,-9Q-9,-9 -9,-5V-2" fill="none" stroke="#333" stroke-width="2.6"/><path d="M-1,-1V-5Q-1,-9 -5,-9Q-9,-9 -9,-5V-2" fill="none" stroke="#e8e8e8" stroke-width="1"/></g>
<g id="plus"><path d="M-6,0H6M0,-6V6" stroke="#333" stroke-width="4.4"/><path d="M-6,0H6M0,-6V6" stroke="#eee" stroke-width="2.4"/></g>
<g id="xx"><path d="M-5,-6L5,6M5,-6L-5,6" stroke="#333" stroke-width="4"/><path d="M-5,-6L5,6M5,-6L-5,6" stroke="#eee" stroke-width="2"/></g>
<g id="cube"><path d="M0,-8L7,-4V4L0,8L-7,4V-4Z" fill="#e8a74c" stroke="#6a4010"/><path d="M0,-8L7,-4L0,0L-7,-4Z" fill="#f6d090"/><path d="M0,0L7,-4V4L0,8Z" fill="#cf8428"/></g>
<g id="scn"><circle cx="-3" cy="5" r="4.2" fill="#eee" stroke="#222"/><rect x="0" y="-6" width="7" height="10" rx="2" fill="#4a80d0" stroke="#222" stroke-width=".7"/><circle cx="-6" cy="-6" r="3" fill="#dcd860" opacity=".85"/></g>
<g id="mat"><circle r="7.5" fill="#ddd" stroke="#222"/><path d="M0,-7.5A7.5,7.5 0 0 1 0,7.5Z" fill="#a07060"/><path d="M-7,2A7.5,7.5 0 0 0 0,7.5V0Z" fill="#666"/></g>
<g id="rl"><rect x="-3" y="-6" width="10" height="12" fill="#c8c8c8" stroke="#222" stroke-width=".8"/><rect x="-7" y="-8" width="10" height="13" fill="#eee" stroke="#222" stroke-width=".8"/><rect x="-5" y="-6" width="6" height="7" fill="#4a80d0"/><path d="M-3,0L-1,-4" stroke="#fff"/></g>
<g id="pm"><circle r="4.8" fill="#a8a8a8" stroke="#222"/><path d="M-3,0H3M0,-3V3" stroke="#111" stroke-width="1.4"/></g>
<circle id="dot" r="2.4" fill="#8a8a8a" stroke="#222"/>
<g id="drop"><path d="M-7,7L1,-1L4,2L-4,9Z" fill="#eee" stroke="#222"/><path d="M2,-2L6,-7L9,-4L5,1Z" fill="#222"/></g>
</defs>
<!-- corner hatches -->
<path d="M0,42L12,55M0,48L7,55M1906,23L1920,40M1912,23L1920,33" stroke="#3c3c3c" fill="none"/>
<path d="M0,1025L15,1040M0,1032L8,1040M1623,1026L1638,1040M1623,1033L1631,1040" stroke="#333" fill="none"/>
<!-- top bar -->
<circle cx="24.5" cy="40" r="8" fill="#5a8ac8" stroke="#1c2c4a"/><text x="24.5" y="45" text-anchor="middle" font-family="DejaVu Serif" font-weight="bold" font-size="13" fill="#fff">i</text>
<use href="#ud" x="42" y="40"/>
<rect x="310" y="33" width="7" height="15" fill="#eee"/><rect x="318" y="33" width="7" height="8" fill="#eee"/><rect x="318" y="42" width="7" height="6" fill="#999"/><use href="#ud" x="335" y="40"/>
<use href="#plus" x="505" y="40"/><use href="#xx" x="530" y="40"/>
<use href="#scn" x="564" y="40"/><use href="#ud" x="581" y="40"/>
<use href="#plus" x="750" y="40"/><use href="#xx" x="775" y="40"/>
<use href="#ud" x="942" y="40"/>
<circle cx="982" cy="42" r="6" fill="#fff" stroke="#e87d0d" stroke-width="2.4"/><circle cx="982" cy="42" r="2.4" fill="#2a5a9a"/><path d="M975,37L985,31" stroke="#e87d0d" stroke-width="2"/>
<!-- left shelf -->
<use href="#td" x="40" y="66"/><use href="#td" x="40" y="221"/><use href="#tr" x="39" y="519"/>
<use href="#grip" x="178" y="67"/><use href="#grip" x="178" y="222"/><use href="#grip" x="178" y="520"/>
<use href="#ud" x="184" y="375"/>
<!-- n panel -->
<use href="#td" x="1411" y="66"/><use href="#grip" x="1572" y="67"/>
<use href="#lock" x="1572" y="133"/><use href="#lock" x="1572" y="158"/><use href="#lock" x="1572" y="183"/>
<use href="#lock" x="1572" y="235"/><use href="#lock" x="1572" y="260"/><use href="#lock" x="1572" y="285"/>
<use href="#lock" x="1572" y="364"/><use href="#lock" x="1572" y="389"/><use href="#lock" x="1572" y="414"/>
<use href="#ud" x="1580" y="311"/>
<use href="#td" x="1410" y="548"/><use href="#grip" x="1572" y="550"/>
<path d="M1431,552L1435,557L1442,545" fill="none" stroke="#eee" stroke-width="2"/>
<path d="M1412,628L1428,612L1431,615L1415,630Z" fill="#b8d060" stroke="#222" stroke-width=".7"/><path d="M1426,614L1429,611L1432,614L1429,617Z" fill="#d04040"/><use href="#ud" x="1438" y="621"/>
<use href="#plus" x="1460" y="621"/>
<use href="#td" x="1411" y="683"/><use href="#grip" x="1572" y="685"/>
<use href="#cube" x="1422" y="780"/><use href="#drop" x="1576" y="778"/>
<g opacity=".55"><use href="#cube" x="1422" y="968"/><use href="#drop" x="1576" y="968"/></g>
<!-- outliner -->
<rect x="1640" y="64" width="6" height="4" fill="#eee"/><path d="M1641,68V80M1641,73H1651M1641,79H1651" stroke="#eee" fill="none"/><use href="#ud" x="1664" y="72"/>
<path d="M1634,102H1650M1658,113V177M1662,177H1674" stroke="#2a2a2a" fill="none"/>
<use href="#pm" x="1634" y="102"/><rect x="1630.5" y="100" width="7" height="4" fill="#222"/><rect x="1631.5" y="101" width="5" height="2" fill="#ddd"/>
<circle cx="1658" cy="102" r="11" fill="#a5a8ac"/><use href="#scn" x="1659" y="102"/>
<use href="#pm" x="1658" y="127"/><use href="#rl" x="1683" y="127"/><path d="M1802,120V136" stroke="#444" stroke-width="2.4"/><circle cx="1825" cy="127" r="11" fill="#8d8f91"/><use href="#rl" x="1825" y="127"/>
<circle cx="1684" cy="152" r="11" fill="#8d919c"/><circle cx="1684" cy="152" r="7.5" fill="#5c94b4" stroke="#223" stroke-width=".6"/><path d="M1680,147Q1687,148 1685,153L1681,156Z" fill="#5a9a50"/><path d="M1686,156L1690,153L1689,158Z" fill="#5a9a50"/>
<use href="#pm" x="1658" y="177"/>
<circle cx="1684" cy="177" r="11" fill="#c08a50"/><path d="M1678,170H1690L1684,184Z" fill="none" stroke="#f4e8d8" stroke-width="1.6"/>
<path d="M1830,170V186" stroke="#444" stroke-width="2.4"/>
<path d="M1849,177Q1858,168 1867,177Q1858,184 1849,177Z" fill="#fff"/><circle cx="1858" cy="176.5" r="2.8" fill="#111"/>
<path d="M1880,168V183L1884,180L1887,186L1889,185L1886,179H1891Z" fill="#eee" stroke="#111" stroke-width="1"/>
<rect x="1901" y="171" width="14" height="13" fill="#666" stroke="#222"/><rect x="1904" y="169" width="6" height="3" fill="#777"/><circle cx="1908" cy="178" r="3.5" fill="#bbb" stroke="#222"/>
<!-- properties tabs -->
<rect x="1638" y="269" width="16" height="5" rx="1" fill="#eee" stroke="#222" stroke-width=".5"/><rect x="1650" y="269" width="4" height="5" fill="#444"/><rect x="1638" y="278" width="16" height="5" rx="1" fill="#ddd"/><rect x="1638" y="278" width="4" height="5" fill="#444"/><use href="#ud" x="1664" y="276" opacity=".7"/>
<g opacity=".8">
<rect x="1687" y="271" width="15" height="12" fill="#aaa" stroke="#333"/><circle cx="1694" cy="278" r="3.6" fill="#555"/><rect x="1691" y="269" width="7" height="2" fill="#777"/>
<use href="#rl" x="1718" y="278"/>
<use href="#scn" x="1744" y="277"/>
<circle cx="1769" cy="277" r="7.5" fill="#5c8aa0" stroke="#999"/><path d="M1765,272Q1772,273 1769,279L1766,281Z" fill="#5a8a58"/>
<path d="M1794,270L1801,274V281L1794,285L1787,281V274Z" fill="#b08a58" stroke="#555" stroke-width=".7"/><path d="M1794,277L1801,274V281L1794,285Z" fill="#98743f"/>
<rect x="1811" y="277" width="10" height="6" rx="3" transform="rotate(-40 1816 280)" fill="none" stroke="#bbb" stroke-width="1.8"/><rect x="1817" y="272" width="10" height="6" rx="3" transform="rotate(-40 1822 275)" fill="none" stroke="#bbb" stroke-width="1.8"/>
<path d="M1838,285L1848,275" stroke="#7f95b5" stroke-width="3"/><path d="M1846,276L1851,271" stroke="#bbb" stroke-width="3.5"/>
<path d="M1862,270H1876L1869,284Z" fill="none" stroke="#999" stroke-width="1.4"/><circle cx="1862" cy="270" r="1.4" fill="#bbb"/><circle cx="1876" cy="270" r="1.4" fill="#bbb"/><circle cx="1869" cy="284" r="1.4" fill="#bbb"/>
</g>
<use href="#mat" x="1894" y="277"/>
<rect x="1909" y="270" width="11" height="14" fill="#8a7a70"/>
<!-- breadcrumb -->
<path d="M1638,321L1645,313" stroke="#eee" stroke-width="1.6"/><path d="M1647,305L1655,313L1651,315L1647,319L1640,312L1645,309Z" fill="#ddd" stroke="#222" stroke-width=".8"/>
<use href="#scn" x="1668" y="313"/>
<path d="M1688,311L1692,315L1688,319Z" fill="#333"/><use href="#cube" x="1719" y="315"/>
<path d="M1790,311L1794,315L1790,319Z" fill="#333"/><use href="#mat" x="1822" y="315"/>
<circle cx="1649" cy="366" r="8" fill="#000"/><path d="M1649,358A8,8 0 0 0 1642,370Q1650,364 1654,360Z" fill="#a010a0"/>
<use href="#pm" x="1648.6" y="483"/><path d="M1745,483H1763M1745,487H1763" stroke="#ddd"/>
<use href="#plus" x="1875" y="360"/><path d="M1869,384H1881" stroke="#333" stroke-width="4"/><path d="M1869,384H1881" stroke="#eee" stroke-width="2"/><path d="M1869,405H1881L1875,416Z" fill="#222"/><path d="M1876,414L1880,407" stroke="#ddd"/>
<use href="#mat" x="1646" y="515"/><use href="#ud" x="1661" y="515"/><use href="#plus" x="1753" y="515"/><use href="#xx" x="1778" y="515"/><use href="#ud" x="1880" y="515"/>
<use href="#tr" x="1635" y="552"/><use href="#grip" x="1873" y="551"/>
<use href="#td" x="1636" y="579"/><use href="#grip" x="1873" y="580"/>
<rect x="1861" y="610" width="16" height="16" fill="#888" stroke="#aaa"/>
<circle cx="1869" cy="642" r="8" fill="#eee" stroke="#222"/>
<path d="M1869,659L1877,663V672L1869,677L1861,672V663Z" fill="#aaa" stroke="#444"/>
<path d="M1861,686Q1869,682 1877,686L1872,692L1871,700H1867L1866,692Z" fill="#ccc" stroke="#444" stroke-width=".7"/>
<path d="M1862,725Q1863,712 1868,708M1868,725Q1869,716 1873,712M1875,725Q1876,720 1879,717" stroke="#ccc" stroke-width="1.5" fill="none"/>
<circle cx="1869" cy="746" r="6" fill="#bbb"/><circle cx="1864" cy="738" r="3" fill="#a8b070"/><circle cx="1874" cy="738" r="3.5" fill="#6080b0"/>
<path d="M1726,731H1745M1726,735H1745" stroke="#ddd"/>
<use href="#td" x="1636" y="774"/><use href="#grip" x="1873" y="776"/>
<g>
<use href="#dot" x="1874" y="816"/><use href="#dot" x="1874" y="860"/><use href="#dot" x="1874" y="891"/><use href="#dot" x="1874" y="922"/><use href="#dot" x="1874" y="953"/><use href="#dot" x="1874" y="984"/><use href="#dot" x="1874" y="1016"/>
<use href="#pm" x="1637" y="860"/><use href="#pm" x="1637" y="891"/><use href="#pm" x="1637" y="922"/><use href="#pm" x="1637" y="953"/>
</g>
<!-- bottom header -->
<path d="M19,1018L30,1016L38,1018V1027L30,1033L19,1027Z" fill="#ddd" stroke="#222"/><path d="M30,1019V1033L38,1027V1018Z" fill="#999"/><use href="#ud" x="43" y="1024"/>
<use href="#cube" x="310" y="1024"/><use href="#ud" x="430" y="1024"/>
<circle cx="459" cy="1024" r="7" fill="#f2f2f2"/><use href="#ud" x="476" y="1024"/>
<circle cx="501" cy="1020" r="5.5" fill="#eee"/><circle cx="508" cy="1029" r="5.5" fill="#ddd"/><rect x="502" y="1022" width="5" height="5" fill="#5a8ac8"/><use href="#ud" x="522" y="1024"/>
<path d="M534,1027H550M534,1027L538,1024M534,1027L538,1030M550,1027L546,1024M550,1027L546,1030" stroke="#eee" fill="none" stroke-width="1.2"/><path d="M535,1018h14" stroke="#333" stroke-width="3" stroke-dasharray="3 2"/>
<path d="M573,1025V1016" stroke="#3060d0" stroke-width="2.4"/><path d="M573,1025L565,1033" stroke="#d03030" stroke-width="2.4"/><path d="M573,1025L581,1033" stroke="#40b040" stroke-width="2.4"/>
<path d="M591,1032L602,1020" stroke="#dde" stroke-width="2.6"/><path d="M597,1017L606,1016L605,1025Z" fill="#dde"/>
<path d="M616,1033Q617,1021 628,1017" fill="none" stroke="#7f97ba" stroke-width="2.4"/>
<path d="M641,1033L648,1021H652" fill="none" stroke="#7f97ba" stroke-width="2.4"/><rect x="651" y="1017" width="6" height="6" fill="#7f97ba"/>
<use href="#ud" x="742" y="1024"/>
<path d="M769,1012V1037M781,1012V1037M793,1012V1037M805,1012V1037M757,1024H817M835,1012V1037M847,1012V1037M859,1012V1037M871,1012V1037M823,1024H883" stroke="#555" fill="none"/>
<circle cx="762" cy="1017" r="2.5" fill="#e8a050" stroke="#222" stroke-width=".7"/>
<rect x="895" y="1017" width="11" height="14" fill="#ddd" stroke="#222"/><path d="M905,1024a2.5,2.5 0 1 1 0,5M905,1029a2.5,2.5 0 1 0 0,5" fill="none" stroke="#111" stroke-width="1.3"/>
<circle cx="933" cy="1024" r="7" fill="none" stroke="#5f5f5f" stroke-width="1.6"/><circle cx="933" cy="1024" r="3.5" fill="none" stroke="#5f5f5f" stroke-width="1.2"/>
<path d="M959,1031L958,1023Q960,1016 968,1019Q973,1023 969,1027L963,1032" fill="none" stroke="#ccc" stroke-width="2.6"/>
<path d="M985,1024H1002M988,1018V1030M993,1018V1030M998,1018V1030" stroke="#bcd" stroke-width="1.3"/><use href="#ud" x="1008" y="1024"/>
<circle cx="1025" cy="1020" r="4" fill="#5a90e0" stroke="#eee"/><path d="M1019,1030H1037M1019,1026H1037M1024,1024V1035M1031,1017V1035" stroke="#222"/>
<rect x="1052" y="1019" width="14" height="12" fill="#eee" stroke="#222"/><circle cx="1059" cy="1025" r="3.5" fill="#555"/><path d="M1067,1015l1.5,3l3,1.5l-3,1.5l-1.5,3l-1.5,-3l-3,-1.5l3,-1.5z" fill="#f0e060"/>
<rect x="1076" y="1022" width="14" height="10" fill="#333"/><path d="M1076,1019L1090,1016" stroke="#eee" stroke-width="4" stroke-dasharray="2 2"/>
</svg>
</div></body></html>
